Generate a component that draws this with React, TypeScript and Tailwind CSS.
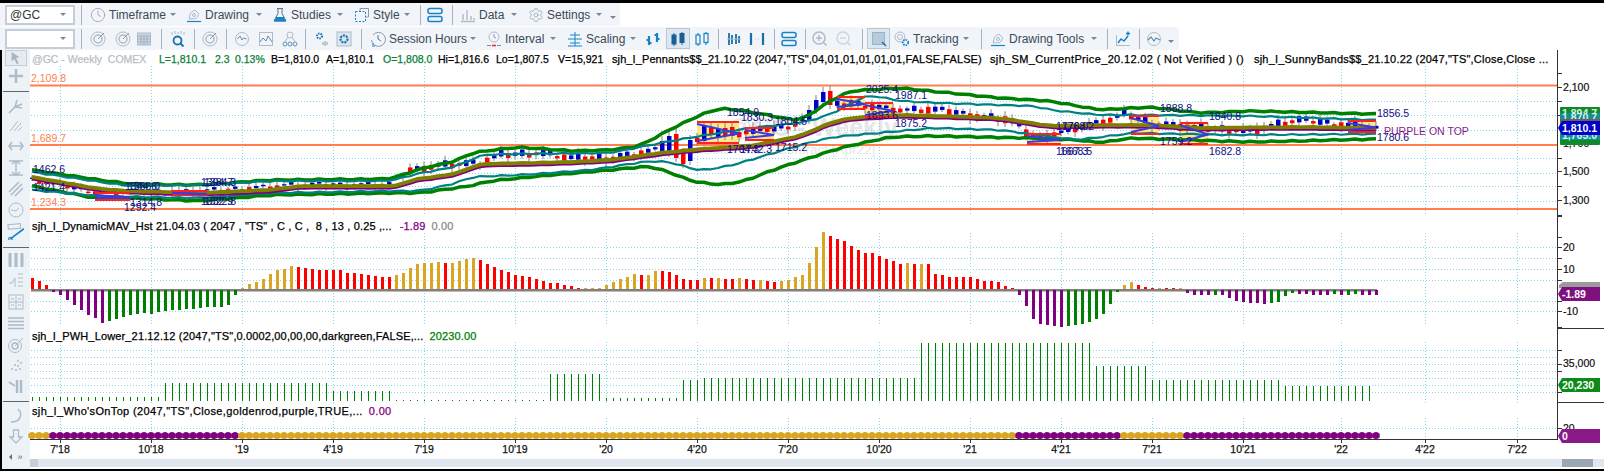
import { Clock, Settings } from 'lucide-react'
import type { ReactNode } from 'react'

const GRAY = '#aebbc8'
const BLUE = '#1683c9'

const bx = (i: number) => 32 + 7 * i
const MONTHS: [number, string][] = [
  [60, "7'18"], [151, "10'18"], [242, "'19"], [333, "4'19"], [424, "7'19"], [515, "10'19"], [606, "'20"], [697, "4'20"], [788, "7'20"],
  [879, "10'20"], [970, "'21"], [1061, "4'21"], [1152, "7'21"], [1243, "10'21"], [1341, "'22"], [1425, "4'22"], [1517, "7'22"],
]

type Pt = [number, number]
const OLIVE: Pt[] = [[32, 179], [100, 191], [130, 193], [200, 195], [270, 192], [300, 188], [400, 188], [410, 182], [440, 178], [455, 176], [480, 166], [530, 165], [570, 164], [610, 162], [660, 155], [700, 151], [750, 148], [800, 138], [830, 125], [850, 120], [900, 117], [940, 118], [1000, 120], [1050, 128], [1100, 127], [1150, 127], [1200, 130], [1300, 129], [1376, 130]]
const TEAL_UP: Pt[] = [[32, 174], [100, 184], [130, 188], [200, 187], [270, 183], [390, 183], [420, 175], [450, 170], [470, 163], [480, 157], [510, 156], [610, 155], [660, 145], [700, 138], [750, 130], [800, 125], [820, 120], [840, 112], [860, 100], [870, 97], [900, 103], [940, 105], [1000, 107], [1035, 108], [1050, 112], [1100, 117], [1150, 117], [1250, 118], [1376, 122]]
const TEAL_LOW: Pt[] = [[32, 192], [100, 198], [200, 200], [270, 195], [390, 193], [420, 193], [457, 185], [470, 179], [520, 177], [590, 172], [610, 169], [650, 163], [670, 164], [700, 173], [733, 167], [767, 157], [800, 147], [833, 139], [867, 136], [933, 130], [1000, 132], [1077, 142], [1133, 135], [1233, 137], [1376, 136]]
const GREEN_UP: Pt[] = [[32, 172], [100, 182], [130, 186], [200, 187], [270, 182], [390, 181], [423, 170], [457, 163], [470, 155], [517, 149], [573, 153], [610, 152], [640, 148], [667, 133], [700, 117], [720, 110], [745, 113], [800, 123], [830, 103], [850, 93], [900, 90], [930, 93], [1000, 100], [1050, 103], [1100, 112], [1150, 109], [1200, 115], [1250, 113], [1376, 116]]
const GREEN_LOW: Pt[] = [[32, 188], [100, 201], [130, 200], [200, 203], [270, 197], [390, 195], [420, 195], [470, 188], [490, 183], [540, 178], [610, 172], [650, 168], [680, 178], [690, 183], [720, 187], [745, 183], [770, 173], [800, 163], [840, 150], [890, 139], [930, 138], [1030, 140], [1080, 142], [1100, 145], [1130, 140], [1250, 144], [1376, 141]]
const CANDLE_MID: Pt[] = [[32, 182], [100, 195], [200, 193], [290, 187], [390, 186], [410, 172], [440, 167], [480, 165], [500, 157], [540, 155], [570, 160], [610, 160], [640, 155], [740, 135], [790, 128], [800, 122], [830, 108], [850, 105], [870, 108], [900, 112], [940, 112], [980, 118], [1010, 122], [1035, 140], [1070, 132], [1110, 122], [1125, 116], [1150, 125], [1200, 130], [1250, 133], [1285, 125], [1300, 122], [1376, 130]]

const toPoints = (pts: Pt[], dy = 0) => pts.map(([x, y]) => `${x},${y + dy}`).join(' ')
const lerp = (pts: Pt[], x: number) => {
  for (let k = 1; k < pts.length; k++) {
    if (x <= pts[k][0]) {
      const [x0, y0] = pts[k - 1]
      const [x1, y1] = pts[k]
      return y0 + ((y1 - y0) * (x - x0)) / (x1 - x0)
    }
  }
  return pts[pts.length - 1][1]
}

// one point per bar, rounded off a little, with the small wobble the bands have
const band = (pts: Pt[], wobble = 0.6): Pt[] => {
  const out: Pt[] = []
  for (let x = 32; x <= 1376; x += 7) {
    const y = (lerp(pts, x - 7) + lerp(pts, x) + lerp(pts, x + 7)) / 3
    out.push([x, y + wobble * Math.sin(x * 0.31)])
  }
  return out
}

// hand read bars for the big move, the rest is seeded noise round the mid line
const FIXED: Record<number, [number, number, string]> = {
  90: [143, 153, '#0000cd'], 91: [138, 155, '#0000cd'], 92: [136, 160, '#ff0000'], 93: [155, 166, '#ff0000'], 94: [142, 163, '#0000cd'],
  95: [140, 144, '#ff0000'], 96: [128, 143, '#0000cd'], 97: [130, 137, '#ff0000'], 98: [131, 140, '#0000cd'], 99: [130, 138, '#ff0000'],
  100: [129, 138, '#ff0000'], 111: [112, 122, '#0000cd'], 112: [102, 112, '#0000cd'], 113: [94, 104, '#0000cd'], 114: [93, 107, '#ff0000'],
}
const CANDLES = Array.from({ length: 193 }, (_, i) => {
  const x = bx(i)
  const r1 = ((i * 7919 + 13) % 97) / 97
  const r2 = ((i * 104729 + 7) % 89) / 89
  const big = x > 400 && x < 1376
  const mid = lerp(CANDLE_MID, x)
  const fixed = FIXED[i]
  if (fixed) return { x, top: fixed[0], bot: fixed[1], color: fixed[2], w1: fixed[0] - 5, w2: fixed[1] + 4 }
  const h = big ? 2 + r1 * 5 : 1 + r1 * 2
  const top = mid - h / 2 + (r2 - 0.5) * 4
  return { x, top, bot: top + h, color: r2 > 0.5 ? '#ff0000' : '#0000cd', w1: top - 2 - r1 * 3, w2: top + h + 2 + r2 * 3 }
})

const PENNANTS = [
  [95, 130, 194, 203, 0], [172, 207, 192, 198, 0], [697, 739, 123, 146, 1], [745, 774, 129, 143, 1], [837, 865, 98, 112, 1],
  [865, 893, 104, 120, 1], [1027, 1061, 135, 147, 1], [1131, 1159, 117, 137, 1], [1180, 1208, 124, 147, 1], [1348, 1376, 122, 135, 1],
]

const LABELS: [number, number, string][] = [
  [33, 175, '1462.6'], [33, 193, '1421.4'], [125, 192, '1344.6'], [128, 192, '1356.0'], [130, 208, '1314.8'], [124, 213, '1292.4'],
  [201, 188, '1394.7'], [204, 188, '1384.3'], [201, 207, '1332.9'], [204, 207, '1322.8'], [727, 118, '1854.9'], [741, 123, '1830.3'],
  [775, 127, '1804.5'], [727, 155, '1704.3'], [740, 155, '1742.3'], [775, 153, '1715.2'], [866, 95, '2025.4'], [895, 101, '1987.1'],
  [895, 129, '1875.2'], [866, 121, '1893.6'], [1056, 132, '1776.0'], [1062, 132, '1768.2'], [1160, 114, '1888.8'], [1209, 122, '1840.8'],
  [1160, 147, '1759.2'], [1209, 157, '1682.8'], [1056, 157, '1667.3'], [1060, 157, '1668.5'], [1377, 119, '1856.5'], [1377, 143, '1780.6'],
]

const R = '#ff0000'
const G = '#daa520'
const P = '#800080'
const D = '#008000'
const HIST: [number, string][] = [
  [11, R], [8, R], [4, R], [-2, P], [-5, P], [-10, P], [-15, P], [-20, P], [-25, P], [-28, P], [-33, P],
  [-31, D], [-29, D], [-27, D], [-25, D], [-24, D], [-23, D], [-24, D], [-22, D], [-21, D], [-20, D], [-20, D], [-19, D], [-19, D], [-18, D], [-17, D], [-17, D], [-17, D], [-15, D], [-5, D],
  [1, G], [5, G], [7, G], [10, G], [15, G], [19, G], [20, G], [23, G],
  [22, R], [21, R], [20, R], [19, R], [19, R], [19, R], [19, R], [16, R], [16, R], [15, R], [14, R], [13, R], [12, R], [12, R],
  [14, G], [16, G], [21, G], [25, G], [26, G], [26, G], [27, G], [26, R], [26, G], [28, G], [30, G], [31, G], [29, R], [25, R], [22, R],
  [19, R], [17, R], [14, R], [13, R], [12, R], [10, R], [8, R], [6, R], [6, R], [4, R], [3, R], [1, R],
  [1, G], [1, G], [1, G], [4, G], [7, G], [10, G], [12, G], [15, G], [14, R], [14, G], [18, G], [18, R], [17, R], [14, R], [10, R], [9, R], [9, R],
  [11, G], [11, R], [11, G], [10, R], [10, R], [11, G], [10, R], [9, R], [9, G], [8, R], [7, R], [8, G], [9, G], [12, G], [14, G], [26, G], [42, G], [57, G],
  [53, R], [50, R], [48, R], [43, R], [39, R], [36, R], [36, R], [33, R], [30, R], [28, R], [25, R], [26, G], [25, R], [25, G], [25, R],
  [15, R], [14, R], [12, R], [12, R], [12, R], [12, R], [10, R], [8, R], [8, R], [7, R], [3, R], [1, R],
  [-5, P], [-16, P], [-29, P], [-34, P], [-35, P], [-36, P], [-37, P], [-36, D], [-35, D], [-34, D], [-32, D], [-29, D], [-24, D], [-14, D], [-2, D],
  [4, G], [7, G], [4, R], [2, R], [1, R], [1, G], [1, R], [1, R], [1, G],
  [-3, P], [-5, P], [-5, P], [-5, P], [-5, D], [-5, P], [-8, P], [-11, P], [-12, P], [-13, P], [-13, P], [-14, P], [-13, D], [-12, D], [-6, D], [-3, D],
  [-4, P], [-4, P], [-5, P], [-5, P], [-5, P], [-4, D], [-5, P], [-5, D], [-4, D], [-5, P], [-5, P], [-5, P],
]

const volHeight = (i: number) => {
  if (i <= 18) return 4
  if (i <= 42) return 18
  if (i <= 51) return 10
  if (i <= 73) return 1
  if (i <= 81) return 27
  if (i <= 92) return 3
  if (i <= 95) return 21
  if (i <= 126) return 23
  if (i <= 151) return 58
  if (i <= 159) return 35
  if (i <= 178) return 21
  return 15
}

const whoColor = (x: number) => (x < 50 ? G : x < 239 ? P : x < 1016 ? G : x < 1121 ? P : x < 1183 ? G : P)

const DOT = '#86d6f3'
function Grid({ y1, y2, rows }: { y1: number; y2: number; rows: number[] }) {
  return (
    <g stroke={DOT} strokeWidth="1" strokeDasharray="1 2" shapeRendering="crispEdges">
      {MONTHS.map(([x]) => <line key={x} x1={x + 0.5} x2={x + 0.5} y1={y1} y2={y2} />)}
      {rows.map((y) => <line key={y} x1="31" x2="1557" y1={y + 0.5} y2={y + 0.5} />)}
    </g>
  )
}

function Axis({ y1, y2, ticks, labels }: { y1: number; y2: number; ticks: number[]; labels: [number, string][] }) {
  return (
    <g>
      <line x1="1557.5" x2="1557.5" y1={y1} y2={y2} stroke="#333" />
      {ticks.map((y) => <line key={y} x1="1557" x2="1562" y1={y + 0.5} y2={y + 0.5} stroke="#333" />)}
      {labels.map(([y, t]) => (
        <text key={t} x="1563" y={y + 4} fontSize="10.5" fill="#111" stroke="#111" strokeWidth="0.2">{t}</text>
      ))}
    </g>
  )
}

function Tag({ y, h, fill, text }: { y: number; h: number; fill: string; text: string }) {
  return (
    <g>
      <polygon points={`1558,${y + h / 2} 1562,${y} 1600,${y} 1600,${y + h} 1562,${y + h}`} fill={fill} />
      <text x="1562" y={y + h / 2 + 4} fontSize="10.5" fontWeight="700" fill="#fff">{text}</text>
    </g>
  )
}

function PricePane() {
  const rows = [103, 117, 132, 160, 175, 188, 203]
  return (
    <div className="relative h-[166px]">
      <svg viewBox="30 52 1574 166" className="block h-full w-full">
        <text x="728" y="138" fontSize="25" fontWeight="700" fill="#e6e6e6">@GC - Weekly</text>
        <text x="702" y="156" fontSize="13.5" fill="#e6e6e6">Gold Future Contract [Apr22]</text>
        <Grid y1={68} y2={218} rows={rows} />
        {PENNANTS.map(([x1, x2, y1, y2, fill]) => fill ? <rect key={x1} x={x1} y={y1} width={x2 - x1} height={y2 - y1} fill="#ffe88a" /> : null)}
        {[87.5, 147, 211].map((y) => <line key={y} x1="30" x2="1557" y1={y} y2={y} stroke="#ff7f50" strokeWidth="2" />)}
        {CANDLES.map((c) => (
          <g key={c.x}>
            <line x1={c.x} x2={c.x} y1={c.w1} y2={c.w2} stroke="#808080" strokeWidth="1" />
            <rect x={c.x - 2} y={c.top} width="4.5" height={c.bot - c.top} fill={c.color} />
          </g>
        ))}
        <polyline points={toPoints(band(GREEN_UP))} fill="none" stroke="#008000" strokeWidth="3.5" strokeLinejoin="round" />
        <polyline points={toPoints(band(GREEN_LOW))} fill="none" stroke="#008000" strokeWidth="3.5" strokeLinejoin="round" />
        <polyline points={toPoints(band(TEAL_UP))} fill="none" stroke="#008080" strokeWidth="2.2" strokeLinejoin="round" />
        <polyline points={toPoints(band(TEAL_LOW))} fill="none" stroke="#008080" strokeWidth="2.2" strokeLinejoin="round" />
        <polyline points={toPoints(band(OLIVE, 0.2), 2)} fill="none" stroke="#800080" strokeWidth="3" strokeLinejoin="round" />
        <polyline points={toPoints(band(OLIVE, 0.2))} fill="none" stroke="#808000" strokeWidth="3.8" strokeLinejoin="round" />
        {PENNANTS.map(([x1, x2, y1, y2]) => (
          <g key={x1}>
            <line x1={x1} x2={x2} y1={y1 + 1} y2={y1 + 1} stroke="#ff2020" strokeWidth="2" />
            <line x1={x1} x2={x2} y1={y2 - 1} y2={y2 - 1} stroke="#ff2020" strokeWidth="2" />
            <line x1={x1} x2={x2} y1={y1 + 3} y2={(y1 + y2) / 2 + 1} stroke="#3a3ae0" strokeWidth="2" />
            <line x1={x1} x2={x2} y1={y2 - 3} y2={(y1 + y2) / 2 + 1} stroke="#3a3ae0" strokeWidth="2" />
          </g>
        ))}
        <g fontSize="10.5" fill="#ff7f50">
          <text x="31" y="84">2,109.8</text>
          <text x="31" y="144">1,689.7</text>
          <text x="31" y="208">1,234.3</text>
        </g>
        <g fontSize="10.5" fill="#0e0e80">
          {LABELS.map(([x, y, t]) => <text key={t} x={x} y={y}>{t}</text>)}
        </g>
        <text x="1384" y="137" fontSize="10.5" fill="#8b1a8b">PURPLE ON TOP</text>
        <Axis y1={52} y2={218} ticks={[75, 89, 103, 117, 160, 173, 188, 202, 217]} labels={[[89, '2,100'], [145, '1,700'], [173, '1,500'], [202, '1,300']]} />
        <rect x="1560" y="109" width="40" height="38" rx="1" fill="#0e8a2a" />
        <text x="1562" y="119" fontSize="10.5" fontWeight="700" fill="#d8f0dc">1,894.7</text>
        <rect x="1560" y="115" width="40" height="27" fill="#0f8f8f" />
        <text x="1562" y="123" fontSize="10.5" fontWeight="700" fill="#d8f0f0">1,870.7</text>
        <text x="1562" y="141" fontSize="10.5" fontWeight="700" fill="#d8f0f0">1,765.0</text>
        <rect x="1560" y="121" width="40" height="3" fill="#7a5a50" />
        <Tag y={123} h={14} fill="#0000cd" text="1,810.1" />
      </svg>
      <PriceLegend />
    </div>
  )
}

function PriceLegend() {
  return (
    <div className="absolute left-[2px] top-[2px] flex h-[14px] w-[1526px] items-center whitespace-nowrap text-[10.5px] leading-[14px] text-black [-webkit-text-stroke:0.25px]">
      <span className="w-[127px] text-[#b9bec4]">@GC - Weekly&nbsp;&nbsp;COMEX</span>
      <span className="w-[56px] text-[#0a7d3a]">L=1,810.1</span>
      <span className="w-[20px] text-[#0a7d3a]">2.3</span>
      <span className="w-[36px] text-[#0a7d3a]">0.13%</span>
      <span className="w-[55px]">B=1,810.0</span>
      <span className="w-[57px]">A=1,810.1</span>
      <span className="w-[55px] text-[#0a7d3a]">O=1,808.0</span>
      <span className="w-[58px]">Hi=1,816.6</span>
      <span className="w-[62px]">Lo=1,807.5</span>
      <span className="w-[54px]">V=15,921</span>
      <span className="w-[378px] text-[11px] tracking-[0.1px]">sjh_I_Pennants$$_21.10.22 (2047,"TS",04,01,01,01,01,01,FALSE,FALSE)</span>
      <span className="w-[264px] text-[11px] tracking-[0.35px]">sjh_SM_CurrentPrice_20.12.02 ( Not Verified ) ()</span>
      <span className="text-[11px] tracking-[0.2px]">sjh_I_SunnyBands$$_21.10.22 (2047,"TS",Close,Close ...</span>
    </div>
  )
}

function HistPane() {
  return (
    <div className="relative h-[112px]">
      <svg viewBox="30 218 1574 112" className="block h-full w-full">
        <Grid y1={235} y2={328} rows={[249, 260, 271, 282, 303, 313]} />
        <rect x="31" y="291" width="1346" height="2.5" fill="#808080" />
        {HIST.map(([v, c], i) => (
          <rect key={i} x={bx(i) - 1} y={v > 0 ? 291 - v : 292} width="3" height={Math.abs(v)} fill={c} shapeRendering="crispEdges" />
        ))}
        <Axis y1={218} y2={330} ticks={[218, 239, 249, 260, 271, 282, 303, 313, 329]} labels={[[249, '20'], [271, '10'], [313, '-10']]} />
        <polygon points="1559,287 1563,284 1600,284 1600,290 1559,290" fill="#9a9a9a" />
        <Tag y={289} h={14} fill="#800f80" text="-1.89" />
      </svg>
      <div className="absolute left-[2px] top-[3px] flex h-[14px] items-center whitespace-nowrap text-[11px] leading-[14px] tracking-[0.15px] text-black [-webkit-text-stroke:0.25px]">
        <span>sjh_I_DynamicMAV_Hst 21.04.03 ( 2047 , "TS" , C , C ,&nbsp;&nbsp;8 , 13 , 0.25 ,...</span>
        <span className="ml-[8px] text-[#800080]">-1.89</span>
        <span className="ml-[6px] text-[#8a8a8a]">0.00</span>
      </div>
    </div>
  )
}

function VolumePane() {
  return (
    <div className="relative h-[75px]">
      <svg viewBox="30 330 1574 75" className="block h-full w-full">
        <Grid y1={344} y2={405} rows={[352, 359, 366, 373, 380, 387, 394]} />
        {Array.from({ length: 192 }, (_, i) => (
          <rect key={i} x={bx(i)} y={403 - volHeight(i)} width="1" height={volHeight(i)} fill="#008000" shapeRendering="crispEdges" />
        ))}
        <line x1="1557" x2="1604" y1="330.5" y2="330.5" stroke="#333" />
        <line x1="1557" x2="1604" y1="404.5" y2="404.5" stroke="#333" />
        <Axis y1={330} y2={405} ticks={[352, 366, 373, 394]} labels={[[365, '35,000']]} />
        <Tag y={380} h={14} fill="#0e8a1a" text="20,230" />
      </svg>
      <div className="absolute left-[2px] top-[1px] flex h-[14px] items-center whitespace-nowrap text-[11px] leading-[14px] tracking-[0.15px] text-black [-webkit-text-stroke:0.25px]">
        <span>sjh_I_PWH_Lower_21.12.12 (2047,"TS",0.0002,00,00,00,darkgreen,FALSE,...</span>
        <span className="ml-[6px] text-[#008000]">20230.00</span>
      </div>
    </div>
  )
}

function WhoPane() {
  return (
    <div className="relative z-10 h-[36px]">
      <svg viewBox="30 405 1574 36" className="block h-full w-full overflow-visible">
        <Grid y1={420} y2={441} rows={[430]} />
        {Array.from({ length: 193 }, (_, i) => (
          <g key={i} fill={whoColor(bx(i))}>
            <circle cx={bx(i)} cy="437.5" r="3.5" />
            <rect x={bx(i) - 3.5} y="435.5" width="7" height="4.5" />
          </g>
        ))}
        <Axis y1={405} y2={441} ticks={[430]} labels={[[430, '20']]} />
        <Tag y={431} h={14} fill="#8a1a8a" text="0" />
      </svg>
      <div className="absolute left-[2px] top-[1px] flex h-[14px] items-center whitespace-nowrap text-[11px] leading-[14px] tracking-[0.35px] text-black [-webkit-text-stroke:0.25px]">
        <span>sjh_I_Who'sOnTop (2047,"TS",Close,goldenrod,purple,TRUE,...</span>
        <span className="ml-[6px] text-[#800080]">0.00</span>
      </div>
    </div>
  )
}

function DatePane() {
  return (
    <div className="h-[20px]">
      <svg viewBox="30 441 1574 20" className="block h-full w-full">
        <line x1="30" x2="1558" y1="441.5" y2="441.5" stroke="#333" />
        {MONTHS.map(([x, t]) => (
          <g key={t}>
            <line x1={x + 0.5} x2={x + 0.5} y1="441" y2="445" stroke="#333" />
            <text x={x} y="455" fontSize="10.5" textAnchor="middle" fill="#111" stroke="#111" strokeWidth="0.25">{t}</text>
          </g>
        ))}
      </svg>
    </div>
  )
}

function Icon({ children, className = 'w-4 h-4' }: { children: ReactNode; className?: string }) {
  return (
    <svg viewBox="0 0 16 16" className={`${className} shrink-0`} fill="none" stroke={GRAY} strokeWidth="1">
      {children}
    </svg>
  )
}

function Arrow({ className = 'ml-[8px]' }: { className?: string }) {
  return <span className={`${className} h-0 w-0 shrink-0 border-x-[3px] border-t-[3px] border-x-transparent border-t-[#7a8794]`} />
}

function Menu({ icon, label, labelClass, className }: { icon: ReactNode; label: string; labelClass: string; className: string }) {
  return (
    <div className={`flex items-center ${className}`}>
      {icon}
      <span className={`ml-[3px] whitespace-nowrap text-[12px] text-[#3c4a58] ${labelClass}`}>{label}</span>
      <Arrow />
    </div>
  )
}

const Sep = ({ className }: { className: string }) => <span className={`h-[20px] w-px shrink-0 bg-[#a7b3bf] ${className}`} />

const Combo = ({ text }: { text: string }) => (
  <div className="flex h-[20px] w-[70px] shrink-0 items-center justify-between border-2 border-[#c4ced8] bg-white pl-[3px] pr-[7px] text-[12px] text-[#333]">
    <span>{text}</span>
    <Arrow className="ml-0" />
  </div>
)

const StackIcon = (
  <Icon>
    <g stroke={BLUE} strokeWidth="1.5">
      <rect x="1" y="1.5" width="14" height="5" rx="2" />
      <rect x="1" y="9.5" width="14" height="5" rx="2" />
    </g>
  </Icon>
)
const PenIcon = (
  <Icon>
    <path d="M3 12l1.5-6L9 3l4 4-3 4.5z" />
    <circle cx="8" cy="8" r="1.5" />
    <path d="M1 14.5h14" stroke={BLUE} strokeWidth="1.2" />
  </Icon>
)
const TargetIcon = (
  <Icon>
    <circle cx="8" cy="8" r="7" />
    <circle cx="8" cy="8" r="4" strokeWidth="1.5" />
    <path d="M8 8l6-6" stroke="#8b99a7" />
  </Icon>
)
const ChartIcon = (
  <Icon>
    <rect x="1.5" y="1.5" width="13" height="13" />
    <path d="M2 11l3-4 3 3 2-5 4 6" stroke="#5f8fb0" />
  </Icon>
)

function ToolbarOne() {
  return (
    <div className="flex h-[23px] w-[620px] items-center rounded-br-[3px] bg-[#f1f4f8] pl-[5px]">
      <Combo text="@GC" />
      <Sep className="ml-[6px]" />
      <Menu className="ml-[8px]" labelClass="w-[53px]" label="Timeframe" icon={<Clock size={16} strokeWidth={1.1} color="#8d9aa7" className="shrink-0" />} />
      <Menu className="ml-[10px]" labelClass="w-[43px]" label="Drawing" icon={PenIcon} />
      <Menu className="ml-[10px]" labelClass="w-[38px]" label="Studies" icon={
        <Icon>
          <path d="M6 1.5v5L2 14h12L10 6.5v-5M5 1.5h6" stroke="#57738c" />
          <path d="M4 10h8l2 4.5H2z" fill={BLUE} stroke="none" />
        </Icon>
      } />
      <Menu className="ml-[11px]" labelClass="w-[23px]" label="Style" icon={
        <Icon>
          <rect x="1.5" y="4.5" width="10" height="10" stroke={BLUE} strokeDasharray="2 1.5" />
          <path d="M6 4V1.5h8.5V10H12" stroke="#8d9aa7" />
        </Icon>
      } />
      <Sep className="ml-[10px]" />
      <div className="ml-[6px]">{StackIcon}</div>
      <Sep className="ml-[9px]" />
      <Menu className="ml-[7px]" labelClass="w-[24px]" label="Data" icon={
        <Icon>
          <path d="M3 13V7M7 13V3M11 13V9M14 13v-2M1 14.5h14" stroke={GRAY} strokeWidth="1.4" />
        </Icon>
      } />
      <Menu className="ml-[11px]" labelClass="w-[41px]" label="Settings" icon={<Settings size={16} strokeWidth={1} color="#8d9aa7" className="shrink-0" />} />
      <Arrow className="ml-[8px] mt-[6px]" />
    </div>
  )
}

function ToolbarTwo() {
  return (
    <div className="mt-[1px] flex h-[23px] w-[1179px] items-center rounded-r-[3px] bg-[#f1f4f8] pl-[5px]">
      <Combo text="" />
      <Sep className="ml-[6px]" />
      <div className="ml-[8px]">{TargetIcon}</div>
      <div className="ml-[9px]">{TargetIcon}</div>
      <div className="ml-[5px]">
        <Icon>
          <rect x="1.5" y="2" width="13" height="12" fill="#c9d6e2" />
          <path d="M1.5 5h13M5 5v9M8 5v9M11 5v9M1.5 8h13M1.5 11h13" stroke="#8fa6ba" strokeWidth="0.7" />
        </Icon>
      </div>
      <Sep className="ml-[9px]" />
      <div className="ml-[8px]">
        <Icon>
          <path d="M2 1v3M5 0v3M8 1v2M11 0v3M14 1v3" stroke={GRAY} />
          <circle cx="7.5" cy="9.5" r="4" stroke="#1673b0" strokeWidth="1.8" />
          <path d="M10.5 12.5l3 3" stroke="#1673b0" strokeWidth="2" />
        </Icon>
      </div>
      <Sep className="ml-[8px]" />
      <div className="ml-[7px]">{TargetIcon}</div>
      <Sep className="ml-[8px]" />
      <div className="ml-[7px]">
        <Icon>
          <circle cx="8" cy="8" r="6.5" />
          <path d="M3.5 8l2.5-3 2 4 1.5-2 3 1" stroke="#5f8fb0" />
        </Icon>
      </div>
      <div className="ml-[8px]">{ChartIcon}</div>
      <div className="ml-[8px]">
        <Icon>
          <circle cx="8" cy="4" r="3" />
          <circle cx="3" cy="13" r="2" stroke="#5f8fb0" />
          <circle cx="8" cy="13" r="2" stroke="#5f8fb0" />
          <circle cx="13" cy="13" r="2" stroke="#5f8fb0" />
          <path d="M3 11l3-5M13 11l-3-5" />
        </Icon>
      </div>
      <Sep className="ml-[7px]" />
      <div className="ml-[8px]">
        <Icon>
          <circle cx="5.5" cy="5" r="2.5" stroke="#1673b0" strokeWidth="2" strokeDasharray="1.5 1" />
          <path d="M11 10v5M9 11v3M13 11v3" stroke={GRAY} strokeWidth="1.5" />
        </Icon>
      </div>
      <div className="ml-[6px]">
        <Icon>
          <rect x="1" y="1" width="14" height="14" fill="#dbe6ef" />
          <circle cx="8" cy="8" r="3.5" stroke="#1673b0" strokeWidth="2.2" strokeDasharray="2 1" />
        </Icon>
      </div>
      <Sep className="ml-[9px]" />
      <Menu className="ml-[8px]" labelClass="w-[73px]" label="Session Hours" icon={
        <Icon>
          <path d="M3 4a7 7 0 1 1-1.5 5" stroke="#8d9aa7" />
          <path d="M8 4v4l3 2" stroke="#57738c" />
          <path d="M2 13h2M2 15h3" stroke={BLUE} />
        </Icon>
      } />
      <Menu className="ml-[10px]" labelClass="w-[37px]" label="Interval" icon={
        <Icon>
          <circle cx="8" cy="6" r="5" />
          <path d="M8 3v3l2 1" stroke="#8d9aa7" />
          <path d="M1 14.5h4M11 14.5h4" stroke="#7c8b99" />
          <path d="M6 14.5h4" stroke="#e83030" strokeWidth="1.6" />
        </Icon>
      } />
      <Menu className="ml-[11px]" labelClass="w-[36px]" label="Scaling" icon={
        <Icon>
          <path d="M8 1v14M3 4h10M1 8h14M3 12h10M1 15h14" stroke={BLUE} />
        </Icon>
      } />
      <div className="ml-[9px]">
        <Icon>
          <path d="M4 5v9M4 9H1.5M4 12h2.5M12 2v9M12 4H9.5M12 8h2.5" stroke={BLUE} strokeWidth="2.2" />
        </Icon>
      </div>
      <div className="ml-[5px] flex h-[21px] w-[24px] items-center justify-center border border-[#b9c8d6] bg-[#dde7f0]">
        <Icon>
          <g fill="#1a5f96" stroke="#1a5f96">
            <rect x="2" y="4" width="4" height="9" />
            <rect x="10" y="2.5" width="4" height="9" />
            <path d="M4 2v13M12 1v13" />
          </g>
        </Icon>
      </div>
      <div className="ml-[4px]">
        <Icon>
          <g stroke={BLUE} strokeWidth="1.2">
            <rect x="2" y="4" width="4" height="9" />
            <rect x="10" y="2.5" width="4" height="9" />
            <path d="M4 2v2M4 13v2M12 1v1.5M12 11.5V14" />
          </g>
        </Icon>
      </div>
      <Sep className="ml-[8px]" />
      <div className="ml-[7px]">
        <Icon>
          <path d="M3 2v12M6 4v9M10 3v10M13 5v7" stroke="#1a6ea8" strokeWidth="1.8" />
          <path d="M1 8h14" stroke={GRAY} />
        </Icon>
      </div>
      <div className="ml-[7px]">
        <Icon>
          <path d="M2 2v12M14 2v12" stroke="#1a6ea8" strokeWidth="2.2" />
          <path d="M6 8h1M9 8h1" stroke={GRAY} />
        </Icon>
      </div>
      <Sep className="ml-[9px]" />
      <div className="ml-[6px]">{StackIcon}</div>
      <Sep className="ml-[8px]" />
      <div className="ml-[6px]">
        <Icon>
          <circle cx="7" cy="7" r="6" strokeWidth="1.5" />
          <path d="M7 4v6M4 7h6M11.5 11.5l3 3" strokeWidth="1.5" />
        </Icon>
      </div>
      <div className="ml-[8px]">
        <Icon>
          <circle cx="7" cy="7" r="6" strokeWidth="1.5" stroke="#cdd6df" />
          <path d="M4 7h6M11.5 11.5l3 3" strokeWidth="1.5" stroke="#cdd6df" />
        </Icon>
      </div>
      <Sep className="ml-[10px]" />
      <div className="ml-[4px] flex h-[21px] w-[23px] items-center justify-center border border-[#b9c8d6] bg-[#dde7f0]">
        <Icon>
          <rect x="1.5" y="1.5" width="12" height="12" fill="#b9cbdb" stroke="#5f8fb0" strokeDasharray="1 1" />
          <path d="M11 11l4 4" stroke="#1a6ea8" strokeWidth="1.5" />
        </Icon>
      </div>
      <Menu className="ml-[4px]" labelClass="w-[42px]" label="Tracking" icon={
        <Icon>
          <circle cx="6" cy="6" r="5" />
          <circle cx="6" cy="6" r="2.5" />
          <circle cx="11.5" cy="11.5" r="2.7" stroke={BLUE} strokeWidth="1.8" strokeDasharray="1.5 1" />
        </Icon>
      } />
      <Sep className="ml-[12px]" />
      <Menu className="ml-[8px]" labelClass="w-[74px]" label="Drawing Tools" icon={PenIcon} />
      <Sep className="ml-[10px]" />
      <div className="ml-[7px]">
        <Icon>
          <path d="M1.5 4v10.5H15" stroke={GRAY} />
          <path d="M3 12l3-4 3 2 4-5" stroke={BLUE} strokeWidth="1.4" />
          <path d="M13 0.5v4M11 2.5h4" stroke={BLUE} strokeWidth="1.4" />
        </Icon>
      </div>
      <Sep className="ml-[8px]" />
      <div className="ml-[6px]">
        <Icon>
          <circle cx="8" cy="8" r="6.5" />
          <path d="M2 9l3-3 3 4 2-3 4 2" stroke="#5f8fb0" strokeWidth="1.2" />
        </Icon>
      </div>
      <Arrow className="ml-[6px] mt-[6px]" />
    </div>
  )
}

// left drawing tools, each cell has its own height so the rows land where the shot has them
function SideBar() {
  const line = <div className="mx-[2px] h-px w-[26px] bg-[#5c6772]" />
  return (
    <div className="flex w-[28px] shrink-0 flex-col items-center bg-[#edf2f7]">
      <div className="flex h-[16px] w-[22px] items-center justify-center border border-[#c6ced8] bg-[#e6ebf0]">
        <Icon className="h-[14px] w-[14px]"><path d="M3 1l9 6-4 1 3 6-2 1-3-6-3 3z" fill="#aab4bf" stroke="none" /></Icon>
      </div>
      <div className="flex h-[20px] items-center"><Icon><path d="M8 1v14M1 8h14" strokeWidth="2.4" /></Icon></div>
      <div className="flex h-[10px] items-center">{line}</div>
      <div className="flex h-[20px] items-center"><Icon><path d="M1 15l6-6 7-3M7 9l2-7M7 9l7 1" strokeWidth="1.6" /></Icon></div>
      <div className="flex h-[18px] items-center"><Icon><path d="M2 14L10 4M6 14l7-8M10 14l4-4" /></Icon></div>
      <div className="flex h-[24px] items-center"><Icon><path d="M1 8h14M4 4L1 8l3 4M12 4l3 4-3 4" strokeWidth="1.6" /></Icon></div>
      <div className="flex h-[20px] items-center"><Icon><path d="M8 1v14M4 4l4-3 4 3M4 12l4 3 4-3M1 1h14M1 15h14" strokeWidth="1.4" /></Icon></div>
      <div className="flex h-[22px] items-center"><Icon><path d="M1 11L11 1M3 14L14 3M7 15l8-8" strokeWidth="1.6" /></Icon></div>
      <div className="flex h-[20px] items-center"><Icon><circle cx="8" cy="8" r="7" /><path d="M3 8l5 1 3-3" /></Icon></div>
      <div className="flex h-[22px] items-center">
        <Icon className="h-[18px] w-[18px]">
          <rect x="1" y="2" width="11" height="4" transform="rotate(-5 6 4)" />
          <path d="M3 15L15 6" stroke={BLUE} strokeWidth="1.4" />
          <circle cx="3" cy="15" r="1.5" stroke={BLUE} />
        </Icon>
      </div>
      <div className="flex h-[10px] items-center">{line}</div>
      <div className="flex h-[16px] items-center"><Icon><path d="M2 1v14M8 1v14M14 1v14" strokeWidth="3" /></Icon></div>
      <div className="flex h-[24px] items-center"><Icon><path d="M1 11h3l3-5v9M10 2h5M10 6h5M10 10h5M10 14h5" /></Icon></div>
      <div className="flex h-[20px] items-center"><Icon><rect x="1" y="1" width="14" height="14" /><path d="M8 1v14M1 8h14M3 5h3M10 5h3M3 11h3M10 11h3" /></Icon></div>
      <div className="flex h-[22px] items-center"><Icon><path d="M0 3h16M0 6.5h16M0 10h16M0 13.5h16" strokeWidth="1.6" /></Icon></div>
      <div className="flex h-[22px] items-center"><Icon><circle cx="7" cy="9" r="6.5" /><circle cx="7" cy="9" r="3" strokeWidth="1.5" /><path d="M7 9l8-8" /></Icon></div>
      <div className="flex h-[20px] items-center"><Icon><g stroke="none" fill={GRAY}><circle cx="10" cy="3" r="1" /><circle cx="13" cy="5" r="1" /><circle cx="7" cy="7" r="1" /><circle cx="10" cy="8" r="1" /><circle cx="4" cy="11" r="1" /><circle cx="8" cy="12" r="1" /><circle cx="12" cy="11" r="1" /></g></Icon></div>
      <div className="flex h-[20px] items-center"><Icon><path d="M1 4l6 4" strokeWidth="2" /><path d="M9 2v13M13 2v13" strokeWidth="2.4" /></Icon></div>
      <div className="flex h-[10px] items-center">{line}</div>
      <div className="flex h-[20px] items-center"><Icon><path d="M10 1c5 5 3 13-7 13" strokeWidth="1.5" /></Icon></div>
      <div className="flex h-[20px] items-center"><Icon><path d="M8 15l-6-6h3.5V2h5v7H14z" strokeWidth="1.3" /></Icon></div>
      <div className="mt-[4px] flex h-[14px] items-center gap-[5px] text-[9px] leading-none text-[#64717e]">
        <span className="h-0 w-0 border-y-[3px] border-r-[3px] border-y-transparent border-r-[#64717e]" />
        <span>»</span>
      </div>
    </div>
  )
}

function ScrollBar() {
  return (
    <div className="flex h-[8px] justify-between bg-[#dfe6ee]">
      <div className="w-[8px] bg-[#c6ced8]" />
      <div className="mr-[11px] w-[31px] bg-[#9ca7b6]" />
    </div>
  )
}

export default function App() {
  return (
    <div className="flex h-[471px] w-[1604px] flex-col overflow-hidden bg-white font-['Liberation_Sans',Arial,sans-serif]">
      <div className="h-[3px] bg-black" />
      <ToolbarOne />
      <ToolbarTwo />
      <div className="flex h-[419px] pt-0">
        <div className="w-[2px] shrink-0 bg-black" />
        <SideBar />
        <div className="w-[1574px] shrink-0">
          <PricePane />
          <HistPane />
          <VolumePane />
          <WhoPane />
          <DatePane />
          <ScrollBar />
        </div>
      </div>
      <div className="h-[2px] bg-black" />
    </div>
  )
}
